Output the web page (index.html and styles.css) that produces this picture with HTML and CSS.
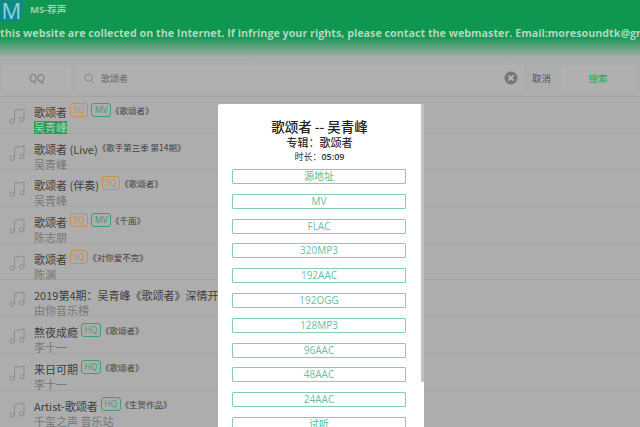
FILE: index.html
```html
<!DOCTYPE html>
<html lang="zh">
<head>
<meta charset="utf-8">
<title>MS-荐声</title>
<link rel="stylesheet" href="styles.css">
</head>
<body>
<svg class="defs" width="0" height="0"><symbol id="note" viewBox="0 0 16 16"><path d="M5.500 13V2.500L15 1V11.500" fill="none" stroke="currentColor" stroke-width=".9"/><circle cx="3.200" cy="13.200" r="2.200" fill="none" stroke="currentColor" stroke-width=".9"/><circle cx="12.700" cy="11.700" r="2.200" fill="none" stroke="currentColor" stroke-width=".9"/></symbol></svg>
<header class="top">
  <div class="brand"><span class="logo">M</span><span class="name">MS-荐声</span></div>
  <div class="notice">this website are collected on the Internet. If infringe your rights, please contact the webmaster. Email:moresoundtk@gmail.com</div>
</header>
<div class="search">
  <div class="source">QQ</div>
  <div class="field">
    <svg class="lens" viewBox="0 0 12 12"><circle cx="5" cy="5" r="4" fill="none" stroke="currentColor"/><path d="M8 8l3 3" stroke="currentColor"/></svg>
    <span class="query">歌颂者</span>
    <svg class="clear" viewBox="0 0 14 14"><circle cx="7" cy="7" r="6.500" fill="#787878"/><path d="M4.500 4.500l5 5M9.500 4.500l-5 5" stroke="#c4c4c4" stroke-width="1.500"/></svg>
  </div>
  <span class="cancel">取消</span>
  <div class="go">搜索</div>
</div>
<ul class="list">
  <li class="row"><svg class="note"><use href="#note"/></svg><div class="info"><div class="title"><span class="song">歌颂者</span><span class="tag sq">SQ</span><span class="tag mv">MV</span><span class="album">《歌颂者》</span></div><div class="artist"><span class="hit">吴青峰</span></div></div></li>
  <li class="row"><svg class="note"><use href="#note"/></svg><div class="info"><div class="title"><span class="song">歌颂者 (Live)</span><span class="album">《歌手第三季 第14期》</span></div><div class="artist">吴青峰</div></div></li>
  <li class="row"><svg class="note"><use href="#note"/></svg><div class="info"><div class="title"><span class="song">歌颂者 (伴奏)</span><span class="tag sq">SQ</span><span class="album">《歌颂者》</span></div><div class="artist">吴青峰</div></div></li>
  <li class="row"><svg class="note"><use href="#note"/></svg><div class="info"><div class="title"><span class="song">歌颂者</span><span class="tag sq">SQ</span><span class="tag mv">MV</span><span class="album">《千面》</span></div><div class="artist">陈志朋</div></div></li>
  <li class="row"><svg class="note"><use href="#note"/></svg><div class="info"><div class="title"><span class="song">歌颂者</span><span class="tag sq">SQ</span><span class="album">《对你爱不完》</span></div><div class="artist">陈渊</div></div></li>
  <li class="row"><svg class="note"><use href="#note"/></svg><div class="info"><div class="title"><span class="song">2019第4期：吴青峰《歌颂者》深情开唱</span></div><div class="artist">由你音乐榜</div></div></li>
  <li class="row"><svg class="note"><use href="#note"/></svg><div class="info"><div class="title"><span class="song">熬夜成瘾</span><span class="tag hq">HQ</span><span class="album">《歌颂者》</span></div><div class="artist">李十一</div></div></li>
  <li class="row"><svg class="note"><use href="#note"/></svg><div class="info"><div class="title"><span class="song">来日可期</span><span class="tag hq">HQ</span><span class="album">《歌颂者》</span></div><div class="artist">李十一</div></div></li>
  <li class="row"><svg class="note"><use href="#note"/></svg><div class="info"><div class="title"><span class="song">Artist-歌颂者</span><span class="tag hq">HQ</span><span class="album">《生贺作品》</span></div><div class="artist">千玺之声 音乐站</div></div></li>
</ul>
<div class="modal">
  <h1 class="m-title">歌颂者 -- 吴青峰</h1>
  <h2 class="m-album">专辑：歌颂者</h2>
  <p class="m-time">时长：<b>05:09</b></p>
  <div class="links">
    <a class="link src">源地址</a><a class="link">MV</a><a class="link">FLAC</a><a class="link">320MP3</a><a class="link">192AAC</a><a class="link">192OGG</a><a class="link">128MP3</a><a class="link">96AAC</a><a class="link">48AAC</a><a class="link">24AAC</a><a class="link src">试听</a>
  </div>
  <div class="bar"></div>
</div>
</body>
</html>
```
FILE: styles.css
```css
* { box-sizing: border-box; }
html, body { margin: 0; height: 427px; overflow: hidden; }
body { background: #adadad; font-family: "Noto Sans CJK SC", "Open Sans", sans-serif; color: #333; position: relative; }
.defs { position: absolute; }
.top { height: 62px; background: linear-gradient(#0f9650 0, #0f9650 36px, #adadad 58px); overflow: hidden; }
.brand { display: flex; align-items: center; height: 22px; }
.logo { width: 23px; height: 22px; background: #0f8a80; border-radius: 0 0 8px 0; color: #8fd0ea; font: 400 22px/21px "Open Sans", sans-serif; text-align: center; }
.name { margin-left: 7px; margin-top: -2px; font: 700 9.500px/12px "Open Sans", "Noto Sans CJK SC", sans-serif; color: #9fd4b4; }
.notice { margin-top: 3px; font: 700 10.740px/16px "Open Sans", sans-serif; color: #b0d8be; white-space: nowrap; }
.search { display: flex; align-items: center; height: 26px; margin: 3px 0 0 3px; font-size: 9px; }
.source { width: 68px; height: 26px; background: #b0b0b0; text-align: center; font: 10px/26px "Open Sans", sans-serif; color: #777; }
.field { display: flex; align-items: center; flex: none; width: 447px; height: 26px; margin-left: 6px; padding: 0 6px 0 7px; background: #b0b0b0; color: #666; }
.lens { width: 11px; height: 11px; color: #888; }
.query { margin-left: 6px; flex: 1; }
.clear { width: 14px; height: 14px; }
.cancel { margin-left: 8px; width: 24px; color: #555; font-size: 9.500px; }
.go { width: 74px; height: 26px; margin-left: 5px; background: #b0b0b0; color: #2aa45e; font-size: 9.500px; line-height: 26px; text-align: center; }
.list { list-style: none; margin: 5px 0 0; padding: 0; }
.row { display: flex; height: 36.700px; border-top: 1px solid #a4a4a4; }
.note { width: 16px; height: 16px; margin: 11px 0 0 9px; color: #8a8a8a; flex: none; }
.info { margin-left: 9px; min-width: 0; white-space: nowrap; padding-top: 2px; }
.title { display: flex; align-items: flex-start; height: 17px; }
.song { font-size: 11px; line-height: 17px; margin-top: 5px; color: #3d3d3d; }
.tag { margin: 4px 0 0 3px; padding: 0 2.500px; height: 14px; border: 1px solid; border-radius: 3px; font: 8.500px/12px "Open Sans", sans-serif; }
.sq { color: #c4924f; }
.mv, .hq { color: #3d9e72; }
.tag + .tag { margin-left: 3px; }
.album { margin: 4px 0 0 0; font-size: 8.500px; line-height: 14px; color: #404040; }
.artist { font-size: 11px; line-height: 14px; margin-top: 4px; color: #777; }
.hit { display: inline-block; background: #2c9b5c; color: #9fd4b4; line-height: 13px; }
.modal { position: absolute; left: 218px; top: 104px; width: 206px; height: 340px; padding-top: 14px; background: #fff; color: #222; text-align: center; border-radius: 2px 0 0 0; }
.m-title { margin: 0 0 0 -3px; font-size: 13.500px; line-height: 17px; font-weight: 500; color: #222; }
.m-album { margin: 0 0 0 -3px; font-size: 11px; line-height: 15px; font-weight: 500; color: #333; }
.m-time { margin: 0 0 0 -3px; font-size: 9px; line-height: 13px; color: #333; }
.m-time b { font: 600 9px/13px "Open Sans", sans-serif; }
.links { display: flex; flex-direction: column; gap: 9.800px; width: 174px; margin: 6px 0 0 14px; }
.link { height: 15px; flex: none; border: 1px solid #80cfb2; border-radius: 1px; font: 10px/13px "Open Sans", "Noto Sans CJK SC", sans-serif; color: #6dbda4; }
.src { color: #55bd8e; }
.bar { position: absolute; top: 0; right: 0; width: 3px; height: 278px; background: #c2c2c2; }
```
